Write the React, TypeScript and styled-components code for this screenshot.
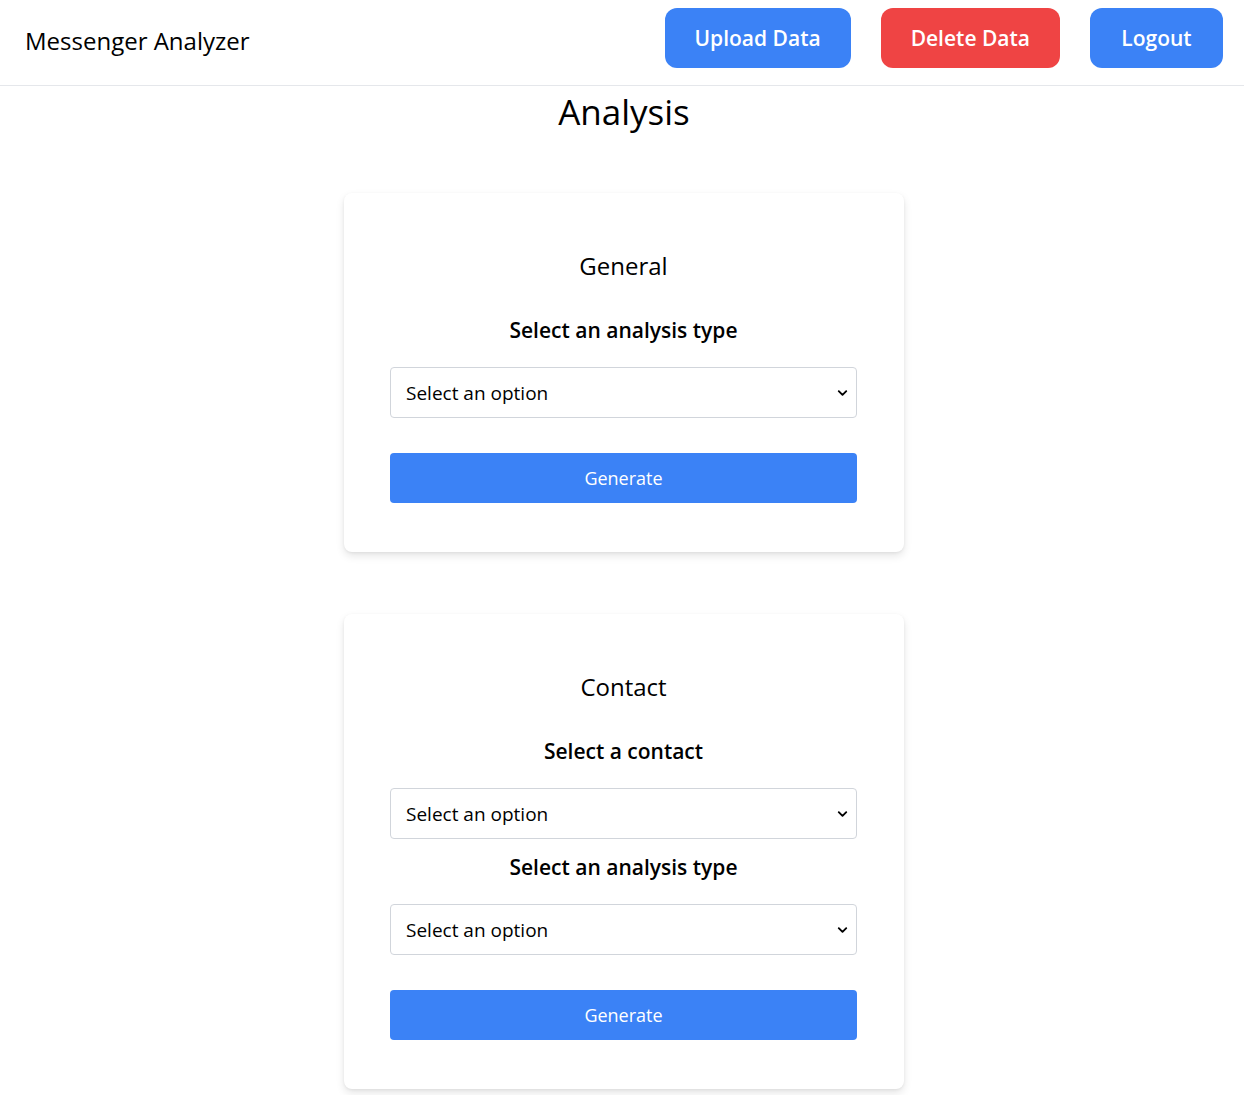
import React from 'react';
import styled, { createGlobalStyle } from 'styled-components';
import { ChevronDown } from 'lucide-react';

const GlobalStyle = createGlobalStyle`
  body {
    margin: 0;
    background: #fff;
    font-family: "Open Sans", "Noto Sans", sans-serif;
    color: #000;
  }
`;

const Header = styled.header`
  display: flex;
  align-items: center;
  justify-content: space-between;
  height: 86px;
  padding: 0 21px 0 25px;
  border-bottom: 1px solid #e5e7eb;
  box-sizing: border-box;
`;

const Brand = styled.div`
  font-size: 24px;
  font-weight: 500;
  margin-top: -5px;
`;

const Nav = styled.nav`
  display: flex;
  gap: 30px;
  margin-top: -10px;
`;

const NavButton = styled.button<{ $danger?: boolean }>`
  height: 60px;
  padding: 0 30px;
  min-width: 133px;
  border: none;
  border-radius: 12px;
  background: ${(p) => (p.$danger ? '#ef4444' : '#3b82f6')};
  color: #fff;
  font-family: inherit;
  font-size: 21px;
  font-weight: 600;
  cursor: pointer;
`;

const Main = styled.main`
  display: flex;
  flex-direction: column;
  align-items: center;
  padding-left: 4px;
`;

const Title = styled.h1`
  margin: 2px 0 57px;
  font-size: 35px;
  font-weight: 400;
  line-height: 48px;
`;

const Card = styled.section`
  width: 560px;
  box-sizing: border-box;
  padding: 57px 47px 49px 46px;
  margin-bottom: 62px;
  background: #fff;
  border-radius: 8px;
  box-shadow: 0 4px 8px rgba(0, 0, 0, 0.1), 0 1px 3px rgba(0, 0, 0, 0.06);
  display: flex;
  flex-direction: column;
  align-items: stretch;
`;

const CardTitle = styled.h2`
  margin: 0 0 20px;
  font-size: 24px;
  font-weight: 500;
  line-height: 32px;
  text-align: center;
`;

const Label = styled.label`
  display: block;
  margin: 14px 0 23px;
  font-size: 21px;
  font-weight: 600;
  line-height: 28px;
  text-align: center;
`;

const SelectWrap = styled.div`
  position: relative;
`;

const Select = styled.select`
  width: 100%;
  height: 51px;
  padding: 0 36px 0 15px;
  border: 1px solid #d1d5db;
  border-radius: 4px;
  background: #fff;
  font-family: inherit;
  font-size: 19px;
  color: #000;
  appearance: none;
  outline: none;
`;

const Chevron = styled(ChevronDown)`
  position: absolute;
  right: 7px;
  top: 50%;
  transform: translateY(-50%);
  pointer-events: none;
`;

const GenerateButton = styled.button`
  height: 50px;
  margin-top: 35px;
  border: none;
  border-radius: 4px;
  background: #3b82f6;
  color: #fff;
  font-family: inherit;
  font-size: 18px;
  cursor: pointer;
`;

const Dropdown = () => (
  <SelectWrap>
    <Select defaultValue="">
      <option value="">Select an option</option>
    </Select>
    <Chevron size={15} strokeWidth={3} />
  </SelectWrap>
);

export default function App() {
  return (
    <>
      <GlobalStyle />
      <Header>
        <Brand>Messenger Analyzer</Brand>
        <Nav>
          <NavButton>Upload Data</NavButton>
          <NavButton $danger>Delete Data</NavButton>
          <NavButton>Logout</NavButton>
        </Nav>
      </Header>
      <Main>
        <Title>Analysis</Title>
        <Card>
          <CardTitle>General</CardTitle>
          <Label>Select an analysis type</Label>
          <Dropdown />
          <GenerateButton>Generate</GenerateButton>
        </Card>
        <Card>
          <CardTitle>Contact</CardTitle>
          <Label>Select a contact</Label>
          <Dropdown />
          <Label>Select an analysis type</Label>
          <Dropdown />
          <GenerateButton>Generate</GenerateButton>
        </Card>
      </Main>
    </>
  );
}
